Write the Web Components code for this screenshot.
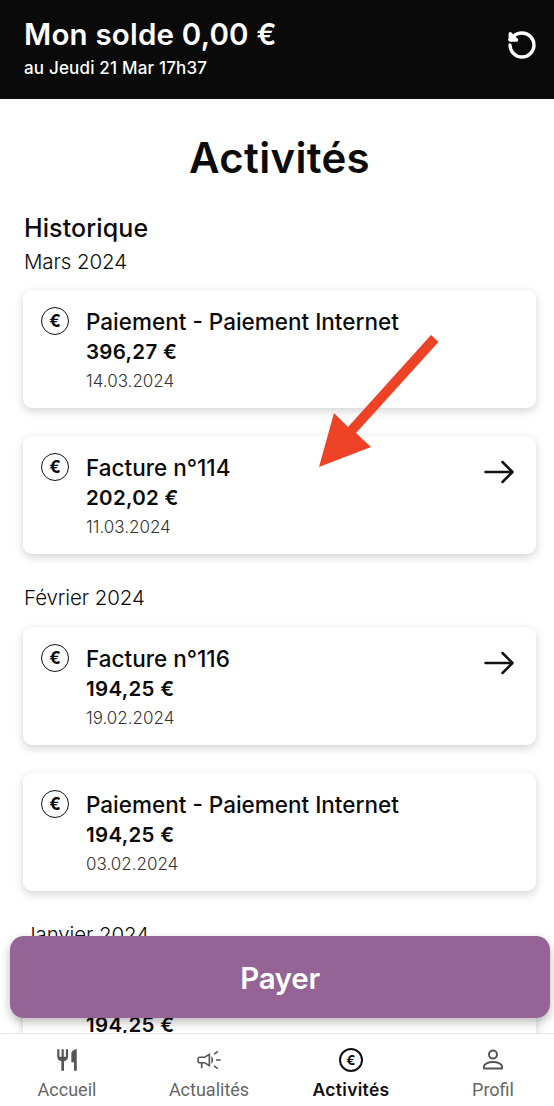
<!DOCTYPE html>
<html lang="fr">
<head>
<meta charset="utf-8">
<title>Activités</title>
<style>
  html, body { margin: 0; padding: 0; background: #fff; }
  body { font-family: Inter, "Liberation Sans", sans-serif; color: #0b0b0b; }
</style>
</head>
<body>
<app-shell>
  <balance-bar slot="top" amount="Mon solde 0,00 €" updated="au Jeudi 21 Mar 17h37"></balance-bar>
  <page-title>Activités</page-title>
  <section-title>Historique</section-title>
  <month-group label="Mars 2024">
    <activity-card name="Paiement - Paiement Internet" amount="396,27 €" date="14.03.2024"></activity-card>
    <activity-card name="Facture n°114" amount="202,02 €" date="11.03.2024" link></activity-card>
  </month-group>
  <month-group label="Février 2024">
    <activity-card name="Facture n°116" amount="194,25 €" date="19.02.2024" link></activity-card>
    <activity-card name="Paiement - Paiement Internet" amount="194,25 €" date="03.02.2024"></activity-card>
  </month-group>
  <month-group label="Janvier 2024">
    <activity-card name="Facture n°117" amount="194,25 €" date="19.01.2024" link></activity-card>
  </month-group>
  <pay-button slot="over">Payer</pay-button>
  <red-arrow slot="over"></red-arrow>
  <bottom-nav slot="bottom">
    <nav-item label="Accueil" icon="food"></nav-item>
    <nav-item label="Actualités" icon="news"></nav-item>
    <nav-item label="Activités" icon="euro" active></nav-item>
    <nav-item label="Profil" icon="user"></nav-item>
  </bottom-nav>
</app-shell>

<script>
class AppShell extends HTMLElement {
  constructor() {
    super();
    this.attachShadow({ mode: "open" });
    this.shadowRoot.innerHTML = `
    <style>
      :host { display: flex; flex-direction: column; position: relative; width: 554px; height: 1106px; overflow: hidden; background: #fff; }
      main { flex: 1; min-height: 0; overflow: hidden; padding: 0 18px 0 23px; }
    </style>
    <slot name="top"></slot>
    <main><slot></slot></main>
    <slot name="bottom"></slot>
    <slot name="over"></slot>
    `;
  }
}
customElements.define("app-shell", AppShell);

class BalanceBar extends HTMLElement {
  constructor() {
    super();
    this.attachShadow({ mode: "open" });
    this.shadowRoot.innerHTML = `
    <style>
      :host { display: flex; align-items: center; justify-content: space-between; height: 99px; box-sizing: border-box; padding: 0 16px 0 24px; background: #0a0a0a; color: #fff; }
      .big { font-size: 29.5px; font-weight: 600; line-height: 36px; letter-spacing: 0.2px; }
      .small { font-size: 17px; font-weight: 500; line-height: 22px; letter-spacing: 0.18px; margin-top: 5px; }
      svg { display: block; margin-bottom: 10px; }
      .text { margin-top: -5px; }
    </style>
    <div class="text">
      <div class="big"></div>
      <div class="small"></div>
    </div>
    <svg width="32" height="32" viewBox="0 0 24 24" fill="none" stroke="#fff" stroke-width="2.5" stroke-linecap="round" stroke-linejoin="round">
      <path d="M3 12a9 9 0 1 0 9-9 9.75 9.75 0 0 0-6.74 2.74L3 8"/>
      <path d="M3.2 3.5v4.8h4.8z" fill="#fff"/>
    </svg>
    `;
  }
  connectedCallback() {
    this.shadowRoot.querySelector(".big").textContent = this.getAttribute("amount");
    this.shadowRoot.querySelector(".small").textContent = this.getAttribute("updated");
  }
}
customElements.define("balance-bar", BalanceBar);

class PageTitle extends HTMLElement {
  constructor() {
    super();
    this.attachShadow({ mode: "open" });
    this.shadowRoot.innerHTML = `
    <style>
      :host { display: block; text-align: center; font-size: 42px; font-weight: 600; line-height: 50px; padding: 34px 0 0; letter-spacing: 0.3px; }
    </style>
    <slot></slot>
    `;
  }
}
customElements.define("page-title", PageTitle);

class SectionTitle extends HTMLElement {
  constructor() {
    super();
    this.attachShadow({ mode: "open" });
    this.shadowRoot.innerHTML = `
    <style>
      :host { display: block; font-size: 25px; font-weight: 500; line-height: 30px; margin: 30px 0 5.5px 1px; letter-spacing: 0.1px; }
    </style>
    <slot></slot>
    `;
  }
}
customElements.define("section-title", SectionTitle);

class MonthGroup extends HTMLElement {
  constructor() {
    super();
    this.attachShadow({ mode: "open" });
    this.shadowRoot.innerHTML = `
    <style>
      :host { display: block; }
      .label { font-size: 20.5px; font-weight: 300; line-height: 26px; margin-left: 1px; padding-bottom: 15.5px; letter-spacing: -0.1px; }
      .cards { display: flex; flex-direction: column; gap: 28px; padding-bottom: 31px; }
    </style>
    <div class="label"></div>
    <div class="cards"><slot></slot></div>
    `;
  }
  connectedCallback() {
    this.shadowRoot.querySelector(".label").textContent = this.getAttribute("label");
  }
}
customElements.define("month-group", MonthGroup);

class ActivityCard extends HTMLElement {
  constructor() {
    super();
    this.attachShadow({ mode: "open" });
    this.shadowRoot.innerHTML = `
    <style>
      :host { display: flex; align-items: flex-start; height: 118px; box-sizing: border-box; padding: 17px 22px 0 18px; background: #fff; border-radius: 9px; box-shadow: 0 3px 10px rgba(0,0,0,0.18); }
      .euro { flex: none; width: 28px; height: 28px; box-sizing: border-box; border: 1.8px solid #111; border-radius: 50%; display: flex; align-items: center; justify-content: center; font-size: 17px; font-weight: 700; margin-right: 17px; }
      .body { flex: 1; }
      .name { font-size: 22.5px; font-weight: 500; line-height: 30px; }
      .amount { font-size: 20.5px; font-weight: 600; line-height: 30px; letter-spacing: 0.3px; }
      .date { font-size: 17px; font-weight: 300; line-height: 28px; color: #333; }
      svg { display: none; flex: none; margin-top: 7px; }
      :host([link]) svg { display: block; }
    </style>
    <div class="euro">€</div>
    <div class="body">
      <div class="name"></div>
      <div class="amount"></div>
      <div class="date"></div>
    </div>
    <svg width="30" height="24" viewBox="0 0 30 24" fill="none" stroke="#111" stroke-width="2.5" stroke-linecap="round" stroke-linejoin="round">
      <path d="M1.5 12H28M18.5 2 28.5 12 18.5 22"/>
    </svg>
    `;
  }
  connectedCallback() {
    this.shadowRoot.querySelector(".name").textContent = this.getAttribute("name");
    this.shadowRoot.querySelector(".amount").textContent = this.getAttribute("amount");
    this.shadowRoot.querySelector(".date").textContent = this.getAttribute("date");
  }
}
customElements.define("activity-card", ActivityCard);

class PayButton extends HTMLElement {
  constructor() {
    super();
    this.attachShadow({ mode: "open" });
    this.shadowRoot.innerHTML = `
    <style>
      :host { position: absolute; left: 10px; top: 936px; width: 540px; height: 82px; display: flex; align-items: center; justify-content: center; background: #946496; color: #fff; border-radius: 14px; font-size: 29.5px; font-weight: 600; padding-top: 1px; box-sizing: border-box; box-shadow: 0 4px 10px rgba(0,0,0,0.28); letter-spacing: -0.3px; }
    </style>
    <slot></slot>
    `;
  }
}
customElements.define("pay-button", PayButton);

class RedArrow extends HTMLElement {
  constructor() {
    super();
    this.attachShadow({ mode: "open" });
    this.shadowRoot.innerHTML = `
    <style>
      :host { position: absolute; left: 310px; top: 330px; width: 135px; height: 145px; }
      svg { display: block; }
    </style>
    <svg width="135" height="145" viewBox="310 330 135 145">
      <path fill="#ee4227" d="M431 335 438.5 342 356 433 371 447 319 467 334 413 348 427z"/>
    </svg>
    `;
  }
}
customElements.define("red-arrow", RedArrow);

class BottomNav extends HTMLElement {
  constructor() {
    super();
    this.attachShadow({ mode: "open" });
    this.shadowRoot.innerHTML = `
    <style>
      :host { display: grid; grid-template-columns: repeat(4, 142px); margin-left: -4px; height: 73px; background: #fff; border-top: 1px solid #e6e6e6; box-sizing: border-box; position: relative; }
    </style>
    <slot></slot>
    `;
  }
}
customElements.define("bottom-nav", BottomNav);

const NAV_ICONS = {
  food: `<path fill="currentColor" d="M11 9H9V2H7v7H5V2H3v7c0 2.12 1.66 3.84 3.75 3.97V22h2.5v-9.03C11.34 12.84 13 11.12 13 9V2h-2v7zm5-3v8h2.5v8H21V2c-2.76 0-5 2.24-5 4z"/>`,
  news: `<path fill="currentColor" d="M18 11.4v1.2h4v-1.2h-4zm-2 6.21c.96.71 2.21 1.65 3.2 2.39l.8-1.1c-.99-.74-2.24-1.68-3.2-2.4l-.8 1.11zM20 5.1 19.2 4c-.99.74-2.24 1.68-3.2 2.4l.8 1.1c.96-.72 2.21-1.65 3.2-2.4zM4 9c-1.1 0-2 .9-2 2v2c0 1.1.9 2 2 2h1v4h1.5v-4H8l5 3V6L8 9H4zm4.4 1.3 3.2-1.9v7.2l-3.2-1.9H4c-.4 0-.6-.3-.6-.7v-2c0-.4.2-.7.6-.7h4.4zM15.5 12c0-1.33-.58-2.53-1.5-3.35v6.69c.92-.81 1.5-2.01 1.5-3.34z"/>`,
  user: `<g fill="none" stroke="currentColor" stroke-width="2"><circle cx="12" cy="6.6" r="4"/><path d="M3 20.5v-2.2c0-2.2 4-4.3 9-4.3s9 2.1 9 4.3v2.2z" stroke-linejoin="round"/></g>`
};
const ICON_SIZE = { food: 26, news: 28, user: 24 };

class NavItem extends HTMLElement {
  constructor() {
    super();
    this.attachShadow({ mode: "open" });
    this.shadowRoot.innerHTML = `
    <style>
      :host { display: flex; flex-direction: column; align-items: center; color: #666; font-family: Roboto, sans-serif; font-size: 18px; line-height: 22px; padding-top: 13px; }
      :host([active]) { color: #111; font-family: Inter, sans-serif; font-weight: 600; font-size: 17.5px; letter-spacing: 0.3px; }
      .icon { height: 26px; display: flex; align-items: center; justify-content: center; margin-bottom: 6px; color: #555; }
      svg { display: block; }
      .euro { width: 24px; height: 24px; box-sizing: border-box; border: 2.2px solid #111; border-radius: 50%; display: flex; align-items: center; justify-content: center; font: 700 13.5px Inter, sans-serif; color: #111; }
    </style>
    <div class="icon"></div>
    <div class="label"></div>
    `;
  }
  connectedCallback() {
    const name = this.getAttribute("icon");
    const size = ICON_SIZE[name];
    this.shadowRoot.querySelector(".icon").innerHTML = name === "euro"
      ? `<div class="euro">€</div>`
      : `<svg width="${size}" height="${size}" viewBox="0 0 24 24">${NAV_ICONS[name]}</svg>`;
    this.shadowRoot.querySelector(".label").textContent = this.getAttribute("label");
  }
}
customElements.define("nav-item", NavItem);
</script>
</body>
</html>
